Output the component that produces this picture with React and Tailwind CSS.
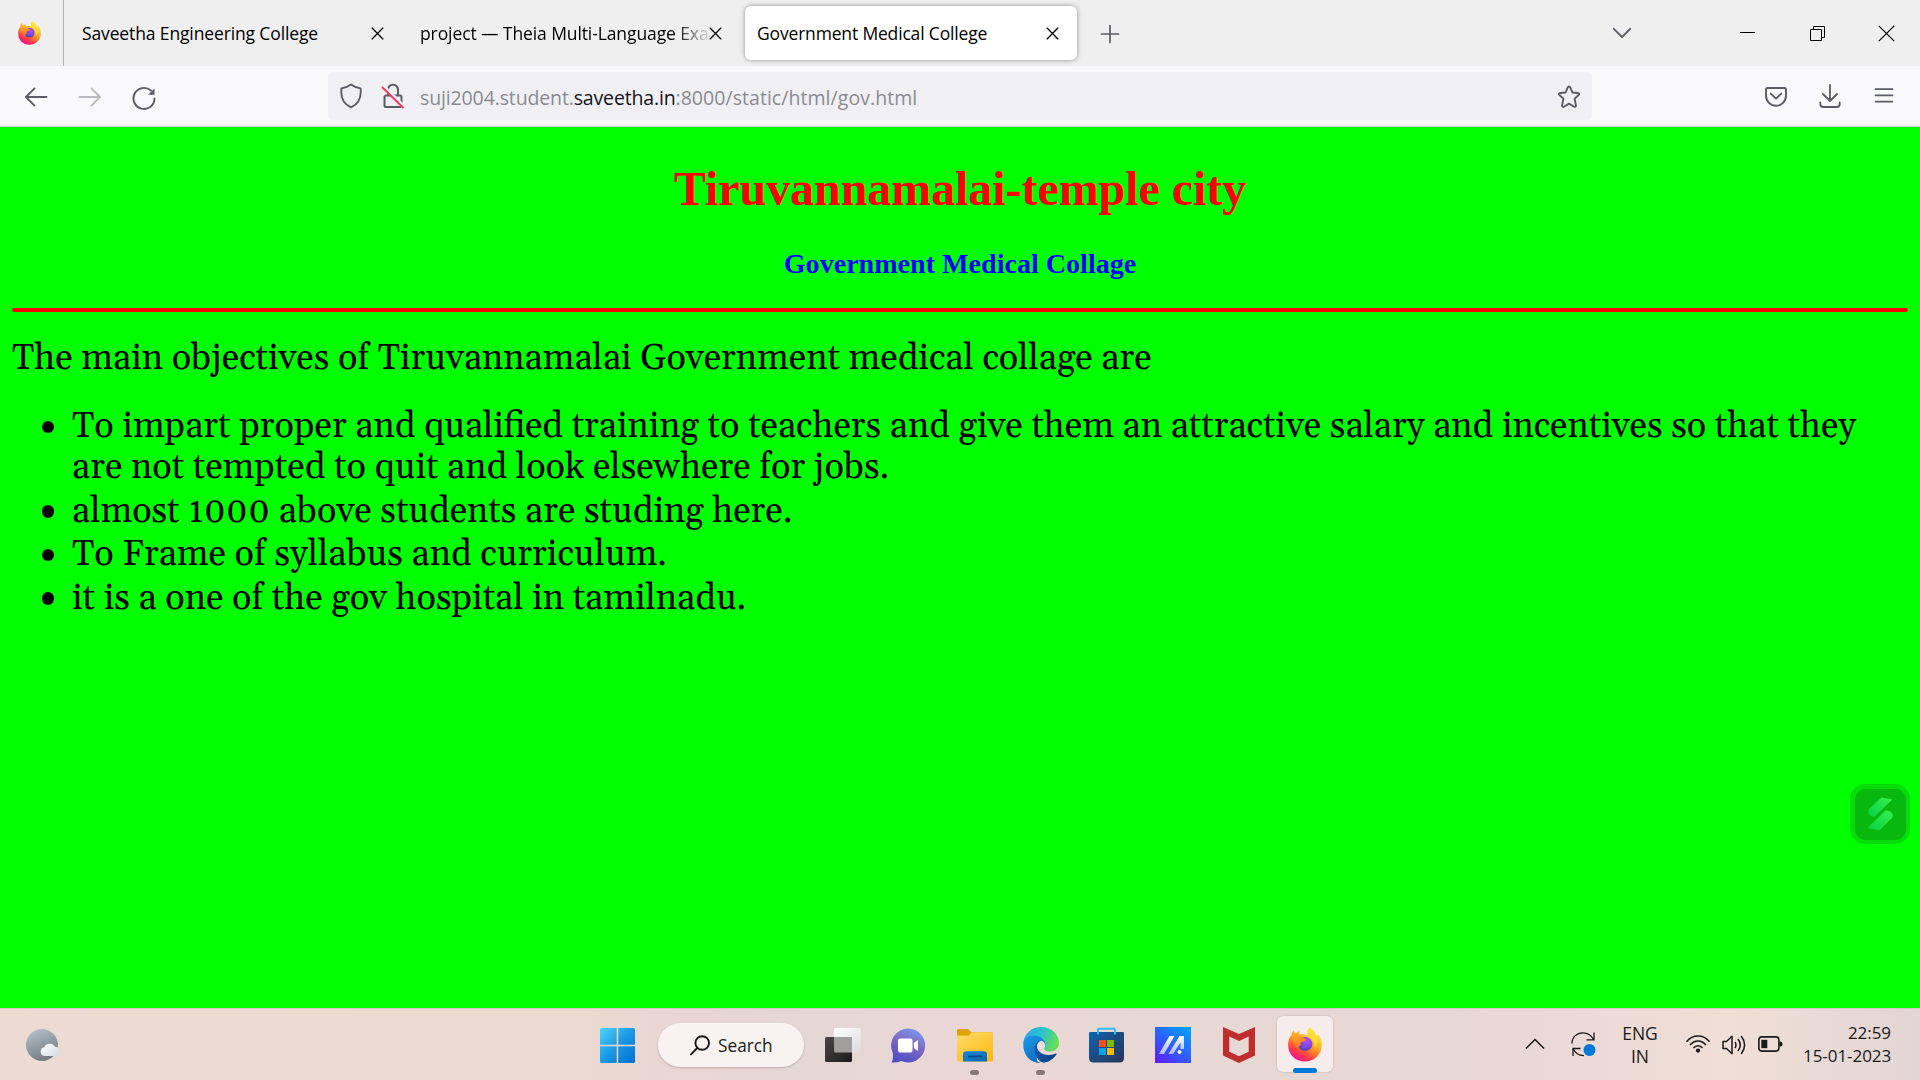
const CLOSE = 'M1 1 L11 11 M11 1 L1 11';

function Stroke({ w = 24, h = 24, vb = '0 0 16 16', sw = 1.2, className = '', children }) {
  return (
    <svg width={w} height={h} viewBox={vb} fill="none" stroke="currentColor" strokeWidth={sw}
      strokeLinecap="round" strokeLinejoin="round" className={'block shrink-0 ' + className}>
      {children}
    </svg>
  );
}

function Firefox({ w, h, id }) {
  return (
    <svg width={w} height={h} viewBox="0 0 34 36" preserveAspectRatio="none" className="block shrink-0">
      <defs>
        <linearGradient id={id + 'a'} x1="0.85" y1="0.05" x2="0.3" y2="1">
          <stop offset="0" stopColor="#fff44f" />
          <stop offset="0.3" stopColor="#ffc534" />
          <stop offset="0.55" stopColor="#ff8a1e" />
          <stop offset="0.78" stopColor="#ff3b47" />
          <stop offset="1" stopColor="#e8119a" />
        </linearGradient>
        <radialGradient id={id + 'b'} cx="0.6" cy="0.3" r="0.75">
          <stop offset="0" stopColor="#b24af5" />
          <stop offset="0.6" stopColor="#7548e0" />
          <stop offset="1" stopColor="#4a3fb8" />
        </radialGradient>
        <linearGradient id={id + 'c'} x1="0" y1="0" x2="0.6" y2="1">
          <stop offset="0" stopColor="#ffb224" />
          <stop offset="1" stopColor="#ff6a2b" />
        </linearGradient>
      </defs>
      <path d="M21.5 0.5 C26 3 27.5 6 28 8.5 C29.5 9 30 8.5 30.5 7.5 C33 11 34 15 33.8 19 C33.3 28.5 26 35.5 17 35.5 C7.5 35.5 0.3 28.5 0.2 19 C0.1 13.5 2 10.5 3.6 8.6 C3.6 6.5 4.2 4.5 5.6 3 C6 5 6.8 6 7.6 6.6 C8.6 5.4 10 4.4 11.6 4 C11 5.6 11.2 6.8 12 7.8 C15 7 18.5 7.6 20 9 C18.8 6 19.6 2.5 21.5 0.5 Z" fill={'url(#' + id + 'a)'} />
      <circle cx="17.2" cy="17.6" r="7.2" fill={'url(#' + id + 'b)'} />
      <path d="M3.6 9 C6 7.6 9 7.4 12 8.6 C13.6 10.8 15.4 12 18.4 12.4 C17.8 14.4 15.6 15.2 13.2 15.6 C12 16.8 12.4 17.8 13.4 18.6 C11.2 18.8 10.2 20.4 10.6 22.4 C7 20.4 5 14 3.6 9 Z" fill={'url(#' + id + 'c)'} />
      <path d="M21.5 0.5 C26 3 27.5 6 28 8.5 C30 13 30 18 27 22 C27.4 16 24.4 12 20.6 9.4 C18.8 6 19.6 2.5 21.5 0.5 Z" fill="#ffe03a" opacity="0.75" />
    </svg>
  );
}

function TabStrip() {
  return (
    <div className="flex h-[66px] items-center bg-[#efefef] text-[17.5px] leading-6 text-black">
      <div className="flex h-full w-16 shrink-0 items-center border-r border-[#b3b3b5] pl-[18px]">
        <Firefox w={23} h={24} id="t" />
      </div>
      <div className="flex w-[338px] shrink-0 items-center pl-[18px]">
        <span className="w-[289px] whitespace-nowrap tracking-[-0.13px]">Saveetha Engineering College</span>
        <Stroke w={13} h={13} vb="0 0 12 12" sw={1.2}><path d={CLOSE} /></Stroke>
      </div>
      <div className="flex w-[343px] shrink-0 items-center pl-[18px]">
        <span className="w-[289px] whitespace-nowrap tracking-[-0.1px] [mask-image:linear-gradient(to_right,black_255px,transparent_292px)]">project — Theia Multi-Language Exa</span>
        <Stroke w={13} h={13} vb="0 0 12 12" sw={1.2}><path d={CLOSE} /></Stroke>
      </div>
      <div className="flex h-[54px] w-[332px] shrink-0 items-center rounded-md bg-white pl-3 shadow-[0_0_5px_rgba(0,0,0,0.4)]">
        <span className="w-[289px] whitespace-nowrap tracking-[-0.17px]">Government Medical College</span>
        <Stroke w={13} h={13} vb="0 0 12 12" sw={1.2}><path d={CLOSE} /></Stroke>
      </div>
      <Stroke w={20} h={20} vb="0 0 20 20" sw={1.7} className="mt-[2px] ml-[22.5px] text-[#5b5b66]"><path d="M10 1.5 V18.5 M1.5 10 H18.5" /></Stroke>
      <div className="ml-auto flex items-center">
        <Stroke w={20} h={14} vb="0 0 20 14" sw={1.8} className="mr-[108px] text-[#5b5b66]"><path d="M1.8 2.8 L10 11 L18.2 2.8" /></Stroke>
        <svg width="15" height="14" className="mr-[54.5px] block"><path d="M0 6.5 H15" stroke="#000" strokeWidth="1" /></svg>
        <svg width="15" height="15" viewBox="0 0 15 15" fill="none" stroke="#000" className="mr-[53.5px] block">
          <path d="M0.5 3.5 H11.5 V14.5 H0.5 Z M3.5 3 V0.5 H14.5 V11.5 H12" />
        </svg>
        <svg width="17" height="17" viewBox="0 0 17 17" fill="none" stroke="#000" strokeWidth="1.2" className="mr-[25px] block">
          <path d="M0.8 0.8 L16.2 16.2 M16.2 0.8 L0.8 16.2" />
        </svg>
      </div>
    </div>
  );
}

function Toolbar() {
  return (
    <div className="flex h-[61px] items-center border-b border-[#d6cfd8] bg-[#f9f9fb] text-[#5b5b66]">
      <Stroke w={24} h={24} className="mt-[2px] ml-6" sw={1.25}><path d="M15 8 H1.5 M7 2.3 L1.3 8 L7 13.7" /></Stroke>
      <Stroke w={24} h={24} className="mt-[2px] ml-[30px] opacity-40" sw={1.25}><path d="M1 8 H14.5 M9 2.3 L14.7 8 L9 13.7" /></Stroke>
      <Stroke w={24} h={24} className="mt-[3px] ml-[30px]" sw={1.3}>
        <path d="M15 8.3 A7 7 0 1 1 12.6 3" />
        <path d="M15 1.6 V5.9 H10.7 Z" fill="currentColor" stroke="none" />
      </Stroke>
      <div className="ml-[172px] flex h-12 w-[1264px] items-center rounded-md bg-[#f0f0f4]">
        <Stroke w={24} h={26} vb="0 0 24 26" sw={1.9} className="ml-[11px]">
          <path d="M12 1.6 C14.5 3.6 18 4.8 21.6 5.4 C22.4 13.5 19.6 21 12 24.3 C4.4 21 1.6 13.5 2.4 5.4 C6 4.8 9.5 3.6 12 1.6 Z" />
        </Stroke>
        <Stroke w={24} h={26} vb="0 0 24 26" sw={2} className="ml-[18px]">
          <path d="M4.5 12.5 H19 Q20.5 12.5 20.5 14 V22.5 Q20.5 24 19 24 H5 Q3.5 24 3.5 22.5 V13.5 M7 12 V7.5 Q7 1.8 12 1.8 Q17 1.8 17 7.5 V12" />
          <path d="M3.5 3.5 L22.5 22.5" stroke="#f0f0f4" strokeWidth="2.5" />
          <path d="M1.5 4.5 L22 24.5" stroke="#ff3364" strokeWidth="1.9" />
        </Stroke>
        <div className="mt-[3px] ml-[15px] whitespace-nowrap text-[19.5px] leading-7 tracking-[0.05px] text-[#8a8a90]">
          <span className="tracking-[-0.13px]">suji2004.student.</span><span className="tracking-[-0.16px] text-[#15141a]">saveetha.in</span>:8000/static/html/gov.html
        </div>
        <Stroke w={24} h={24} vb="0 0 24 24" sw={1.9} className="mt-px mr-[11px] ml-auto">
          <path d="M12 1.5 Q12.9 1.5 13.4 2.7 L15.4 7.5 L20.9 8 Q22.8 8.4 21.6 10 L17.6 13.6 L18.9 20.4 Q18.9 22.3 17.2 21.7 L12 18.6 L6.8 21.7 Q5.1 22.3 5.1 20.4 L6.4 13.6 L2.4 10 Q1.2 8.4 3.1 8 L8.6 7.5 L10.6 2.7 Q11.1 1.5 12 1.5 Z" />
        </Stroke>
      </div>
      <Stroke w={24} h={22} vb="0 0 24 22" sw={1.9} className="mt-px ml-[172px]">
        <path d="M3.6 2 H20.4 Q22 2 22 3.6 V9.6 C22 15.6 17.5 19.8 12 19.8 C6.5 19.8 2 15.6 2 9.6 V3.6 Q2 2 3.6 2 Z M6.8 7.6 L12 12.6 L17.2 7.6" />
      </Stroke>
      <Stroke w={24} h={26} vb="0 0 24 26" sw={1.8} className="mb-px ml-[29.5px]">
        <path d="M12 2 V17.5 M5 11 L12 18 L19 11 M2.3 19.5 V21 Q2.3 24 5.3 24 H18.7 Q21.7 24 21.7 21 V19.5" />
      </Stroke>
      <Stroke w={20} h={18} vb="0 0 20 18" sw={1.7} className="ml-[32px]">
        <path d="M1.5 2.2 H18.5 M1.5 8.4 H18.5 M1.5 14.6 H18.5" />
      </Stroke>
    </div>
  );
}

const ITEMS = [
  'To impart proper and qualified training to teachers and give them an attractive salary and incentives so that they are not tempted to quit and look elsewhere for jobs.',
  'almost 1000 above students are studing here.',
  'To Frame of syllabus and curriculum.',
  'it is a one of the gov hospital in tamilnadu.',
];

function Page() {
  return (
    <main className="relative h-[881px] bg-[#00ff00] px-3 pt-[34px] text-black">
      <h1 className="text-center font-['Liberation_Serif',serif] text-[48px] leading-[55px] font-bold tracking-[-0.06px] text-[#ff0000]">Tiruvannamalai-temple city</h1>
      <h3 className="mt-8 text-center font-['Liberation_Serif',serif] text-[28.08px] leading-8 font-bold text-[#0000ff]">Government Medical Collage</h3>
      <div className="mt-7 h-1 rounded-sm bg-[#ff0000]" />
      <div className="font-[Gelasio,Georgia,serif] text-[36px] leading-[41px]">
        <p className="mt-[26px]">The main objectives of Tiruvannamalai Government medical collage are</p>
        <ul className="mt-[27px] flex flex-col gap-[2.6px]">
          {ITEMS.map((t) => (
            <li key={t} className="flex items-start">
              <span className="mt-[14.5px] mr-[18px] ml-[29.5px] size-[12.5px] shrink-0 rounded-full bg-black" />
              <span>{t}</span>
            </li>
          ))}
        </ul>
      </div>
      <div className="absolute top-[657px] right-[10px] flex size-[60px] items-center justify-center rounded-[15px] bg-[#05dc0a]">
        <div className="flex size-[51px] items-center justify-center rounded-[11px] bg-[#08b80e]">
          <svg width="26" height="34" viewBox="0 0 26 34">
            <defs>
              <linearGradient id="sw" x1="0" y1="1" x2="1" y2="0">
                <stop offset="0" stopColor="#06cf48" />
                <stop offset="1" stopColor="#38f04c" />
              </linearGradient>
            </defs>
            <path d="M14.5 0.5 L25.5 2.5 L7 20 C2 19 0 15 2.5 11.5 Z" fill="url(#sw)" />
            <path d="M12 33.5 L0.5 31 L18.5 13.5 C24.5 13.5 27.5 17.5 24.5 21.5 Z" fill="url(#sw)" />
          </svg>
        </div>
      </div>
    </main>
  );
}

function Cell({ children, mark }) {
  return (
    <div className="relative flex h-[72px] w-[66px] shrink-0 items-center justify-center">
      {children}
      {mark && <span className="absolute bottom-[6px] left-[28.5px] h-[5px] w-[9px] rounded-full bg-[#857a79]" />}
    </div>
  );
}

function Taskbar() {
  return (
    <footer className="flex h-[72px] items-start border-t border-[#d5c6c4] bg-[linear-gradient(90deg,#ecdbd2_0%,#eadad0_30%,#e9d6d3_34%,#e4d7d4_42%,#ead7d5_50%,#e7d8d3_62%,#e9d8d6_80%,#f0dfd6_90%,#e5d8d5_97%,#e2d6d4_100%)] text-[17px] text-[#1b1a1a]">
      <div className="flex h-[72px] w-[584px] shrink-0 items-center pl-[26px]">
        <svg width="36" height="34" viewBox="0 0 36 34">
          <defs>
            <linearGradient id="moon" x1="0.3" y1="0" x2="0.7" y2="1"><stop offset="0" stopColor="#b2bec7" /><stop offset="1" stopColor="#6f7780" /></linearGradient>
            <linearGradient id="cld" x1="0" y1="0" x2="1" y2="1"><stop offset="0" stopColor="#fff" /><stop offset="1" stopColor="#cfdae3" /></linearGradient>
          </defs>
          <circle cx="16" cy="17" r="16" fill="url(#moon)" />
          <path d="M18.5 28 A4.4 4.4 0 0 1 18.3 19.3 A6 6 0 0 1 29 18.7 A4.7 4.7 0 0 1 30 28 Z" fill="url(#cld)" />
        </svg>
      </div>
      <Cell>
        <svg width="35" height="35" viewBox="0 0 35 35" className="mb-[-1px]">
          <defs><linearGradient id="win" gradientUnits="userSpaceOnUse" x1="0" y1="0" x2="35" y2="35"><stop offset="0" stopColor="#52d3fc" /><stop offset="0.5" stopColor="#1a98e4" /><stop offset="1" stopColor="#0070d0" /></linearGradient></defs>
          <path d="M1.5 0 H16.7 V16.7 H0 V1.5 Q0 0 1.5 0 Z M18.2 0 H33.5 Q35 0 35 1.5 V16.7 H18.2 Z M0 18.2 H16.7 V35 H1.5 Q0 35 0 33.5 Z M18.2 18.2 H35 V33.5 Q35 35 33.5 35 H18.2 Z" fill="url(#win)" />
        </svg>
      </Cell>
      <div className="mt-[14px] mr-[5.500px] ml-2 flex h-[44px] w-[146px] shrink-0 items-center rounded-full bg-[#f8f2f1] pl-[32px] text-[17.25px] shadow-[0_1px_2px_rgba(120,90,90,0.35)]">
        <svg width="21" height="21" viewBox="0 0 21 21" fill="none" stroke="#1b1a1a" strokeWidth="1.9" strokeLinecap="round"><circle cx="12.2" cy="8" r="6.8" /><path d="M7.2 13 L1 19.4" /></svg>
        <span className="mt-[2px] ml-[7px]">Search</span>
      </div>
      <Cell>
        <svg width="36" height="36" viewBox="0 0 36 36">
          <defs>
            <linearGradient id="tv1" x1="0" y1="0" x2="1" y2="1"><stop offset="0" stopColor="#4a4846" /><stop offset="1" stopColor="#1c1b1b" /></linearGradient>
            <linearGradient id="tv2" x1="0" y1="0" x2="1" y2="1"><stop offset="0" stopColor="#fff" /><stop offset="1" stopColor="#dedcdc" /></linearGradient>
          </defs>
          <rect x="9" y="1" width="27" height="24.5" rx="1.5" fill="url(#tv2)" />
          <rect x="0" y="10" width="27" height="25" rx="1.5" fill="url(#tv1)" />
          <path d="M9 10 H27 V25.5 H10.5 Q9 25.5 9 24 Z" fill="#a09f9e" />
        </svg>
      </Cell>
      <Cell>
        <svg width="34" height="35" viewBox="0 0 34 35" className="mr-px">
          <defs><linearGradient id="chat" x1="0.8" y1="0.1" x2="0.4" y2="1"><stop offset="0" stopColor="#7a93ea" /><stop offset="0.45" stopColor="#7e68bf" /><stop offset="1" stopColor="#5251c4" /></linearGradient></defs>
          <path d="M17 0.5 A17 17 0 1 1 10.2 33 Q5.5 35 0.5 34.4 Q2.6 31.5 1.8 25 A17 17 0 0 1 17 0.5 Z" fill="url(#chat)" />
          <rect x="7" y="10.5" width="14.5" height="14" rx="2" fill="#fff" />
          <path d="M22.8 15 L27 12 V23 L22.8 20 Z" fill="#fff" />
        </svg>
      </Cell>
      <Cell mark>
        <svg width="36" height="34" viewBox="0 0 36 34">
          <defs>
            <linearGradient id="fo" x1="0" y1="0" x2="0.8" y2="1"><stop offset="0" stopColor="#ffdc6b" /><stop offset="1" stopColor="#fbb916" /></linearGradient>
            <linearGradient id="fb" x1="0" y1="0" x2="1" y2="1"><stop offset="0" stopColor="#1787dc" /><stop offset="1" stopColor="#0a66b2" /></linearGradient>
          </defs>
          <path d="M0 2.2 Q0 1 1.2 1 H11 L14.5 4.2 H34.5 Q36 4.2 36 5.7 V12 H0 Z" fill="#e0a109" />
          <path d="M0 7.4 H11.5 L15 4.2 H34.5 Q36 4.2 36 5.7 V32.3 Q36 33.5 34.8 33.5 H1.2 Q0 33.5 0 32.3 Z" fill="url(#fo)" />
          <path d="M6 33.5 V26.5 Q6 23.2 9.3 23.2 H26.7 Q30 23.2 30 26.5 V33.5 Z" fill="url(#fb)" />
          <path d="M11 28.5 H25" stroke="#0b4a86" strokeWidth="1.8" />
        </svg>
      </Cell>
      <Cell mark>
        <svg width="36" height="36" viewBox="0 0 36 36">
          <defs>
            <linearGradient id="e1" x1="0" y1="0.2" x2="1" y2="0.5"><stop offset="0" stopColor="#2fa9e6" /><stop offset="0.5" stopColor="#2cc3cf" /><stop offset="1" stopColor="#67e04c" /></linearGradient>
            <linearGradient id="e2" x1="0" y1="0" x2="0.6" y2="1"><stop offset="0" stopColor="#1e9ae6" /><stop offset="1" stopColor="#0c6cc4" /></linearGradient>
            <linearGradient id="e3" x1="0" y1="0" x2="1" y2="0.6"><stop offset="0" stopColor="#1360b0" /><stop offset="1" stopColor="#0f4287" /></linearGradient>
          </defs>
          <path d="M0.4 15 C2 6 9 0 18 0 C28.5 0 36 7.5 36 16 C36 21.5 32 24.5 27 24.5 C23 24.5 20.5 23.3 21 21.6 C23.5 18 20.5 13.8 16.5 13 Z" fill="url(#e1)" />
          <path d="M0.2 17 C0.5 12 5 8.6 10.5 8.6 C17 8.6 22 12.5 22.3 17.5 C22.3 19 21.8 20.5 21 21.6 C20.5 16 16 13.5 13 16 L14 34 L17.5 36 C7 36 0 28 0.2 17 Z" fill="url(#e2)" />
          <path d="M17.8 13.5 C14.2 13.8 11.8 17 11.6 21 C11.3 29 16 35.4 21 35.7 C26 35 31 31.5 33.6 27.2 C33.9 26.6 33.3 26.2 32.7 26.5 C23 30.5 12.500 25.5 14.2 17.5 Z" fill="url(#e3)" />
          <path d="M17.8 13.8 C14 15.5 13.2 20 16 23.5 C19 27 25 28.4 32.7 26.5 C26.5 26 20 24.5 21.2 21.4 C23.5 18 21.5 14.2 17.8 13.8 Z" fill="#e9dcda" />
        </svg>
      </Cell>
      <Cell>
        <svg width="35" height="36" viewBox="0 0 35 36" className="mr-px">
          <defs><linearGradient id="st" x1="0" y1="0" x2="1" y2="1"><stop offset="0" stopColor="#0e65b4" /><stop offset="0.5" stopColor="#1d4a80" /><stop offset="1" stopColor="#28365c" /></linearGradient></defs>
          <path d="M9 7.5 V2.9 Q9 1.7 10.2 1.7 H24.8 Q26 1.7 26 2.9 V7.5" fill="none" stroke="#30bdf0" strokeWidth="1.9" />
          <path d="M0 6 Q0 5 1 5 H34 Q35 5 35 6 V31 Q35 35.5 30.5 35.5 H4.5 Q0 35.5 0 31 Z" fill="url(#st)" />
          <path d="M9 4.500 V7.5 M26 4.5 V7.5" stroke="#30bdf0" strokeWidth="1.9" />
          <path d="M10 13 H17 V20 H10 Z" fill="#f25022" /><path d="M18 13 H25 V20 H18 Z" fill="#7fba00" />
          <path d="M10 21 H17 V28 H10 Z" fill="#00a4ef" /><path d="M18 21 H25 V28 H18 Z" fill="#ffb900" />
        </svg>
      </Cell>
      <Cell>
        <svg width="36" height="36" viewBox="0 0 36 36">
          <defs>
            <linearGradient id="as" x1="0.1" y1="1" x2="0.9" y2="0"><stop offset="0" stopColor="#5c1ffa" /><stop offset="0.5" stopColor="#2b62ff" /><stop offset="1" stopColor="#00a3ff" /></linearGradient>
            <linearGradient id="al" x1="0" y1="0" x2="0" y2="1"><stop offset="0" stopColor="#fff" /><stop offset="1" stopColor="#a9b8ff" /></linearGradient>
          </defs>
          <rect width="36" height="36" fill="url(#as)" />
          <path d="M14.5 9 H19.5 L9 27 H4 Z M24.500 9 H29 V22 H25.5 V15.5 L18 27 H13.500 Z" fill="url(#al)" />
          <circle cx="24.5" cy="25" r="2" fill="#fff" />
        </svg>
      </Cell>
      <Cell>
        <svg width="32" height="36" viewBox="0 0 32 36">
          <path fillRule="evenodd" d="M0 0 L16 7 L32 0 V28.5 L16 36 L0 28.5 Z M6.3 9.5 V24.7 L16 29.3 L25.7 24.7 V9.5 L16 14 Z" fill="#bf2e2c" />
        </svg>
      </Cell>
      <Cell>
        <div className="relative mb-0.5 flex size-14 items-center justify-center rounded-md bg-[#f5eceb] shadow-[0_0_2px_rgba(120,90,90,0.4)]">
          <Firefox w={34} h={35} id="b" />
          <span className="absolute bottom-[-1px] left-4 h-[5px] w-6 rounded-full bg-[#0078d7]" />
        </div>
      </Cell>
      <div className="mr-[29px] ml-auto flex h-[72px] items-center">
        <svg width="20" height="12" fill="none" stroke="#1b1a1a" strokeWidth="1.5" className="mr-[26px] mb-[3px]"><path d="M1 10.5 L10 1.5 L19 10.5" /></svg>
        <svg width="25" height="26" viewBox="0 0 25 26" fill="none" stroke="#1b1a1a" strokeWidth="1.3" className="mr-[26px] mb-[2px]">
          <path d="M1 12.5 C1 5.8 6 1.8 11.8 1.8 C16.5 1.8 20.5 4.5 22.5 8.5 M23 1.5 V8.8 H15.5 M2 25 V17.5 H9.5 M2.3 18 C4.5 22.5 8.5 24.8 13 24.6" />
          <circle cx="18.5" cy="19" r="6" fill="#0078d7" stroke="none" />
        </svg>
        <div className="mr-[27px] flex w-[36px] flex-col items-center text-[17.5px] leading-[23px]">
          <span>ENG</span><span>IN</span>
        </div>
        <svg width="26" height="20" viewBox="0 0 26 20" fill="none" stroke="#1b1a1a" strokeWidth="1.5" className="mr-[11px] mb-[2px]">
          <path d="M1.5 7.8 C8 0.2 18 0.2 24.5 7.8 M5 11 C9.5 5.5 16.5 5.5 21 11 M8.5 14 C11 11 15 11 17.5 14" /><circle cx="13" cy="16.6" r="2.1" fill="#1b1a1a" stroke="none" />
        </svg>
        <svg width="25" height="22" viewBox="0 0 25 22" fill="none" stroke="#1b1a1a" strokeWidth="1.5" strokeLinejoin="round" className="mr-[11px] mb-px">
          <path d="M1 7.5 H4.5 L10 2.2 V19.8 L4.5 14.5 H1 Z M13 8 Q15 11 13 14 M16 5 Q20.5 11 16 17 M19.2 2 Q26 11 19.2 20" />
        </svg>
        <svg width="25" height="16" viewBox="0 0 25 16" className="mr-[20px] mb-[2px]">
          <rect x="0.9" y="0.9" width="20" height="14.2" rx="3" fill="none" stroke="#1b1a1a" strokeWidth="1.6" />
          <rect x="3.3" y="3.8" width="6" height="8.4" fill="#1b1a1a" /><path d="M21.5 5.5 H23 Q24.5 6 24.5 8 Q24.5 10 23 10.5 H21.5 Z" fill="#1b1a1a" />
        </svg>
        <div className="mb-[2px] w-[88px] text-right leading-[23px] whitespace-nowrap tracking-[-0.05px]">
          <div>22:59</div><div>15-01-2023</div>
        </div>
      </div>
    </footer>
  );
}

export default function App() {
  return (
    <div className="h-[1080px] w-[1920px] overflow-hidden font-['Open_Sans',sans-serif]">
      <TabStrip />
      <Toolbar />
      <Page />
      <Taskbar />
    </div>
  );
}
